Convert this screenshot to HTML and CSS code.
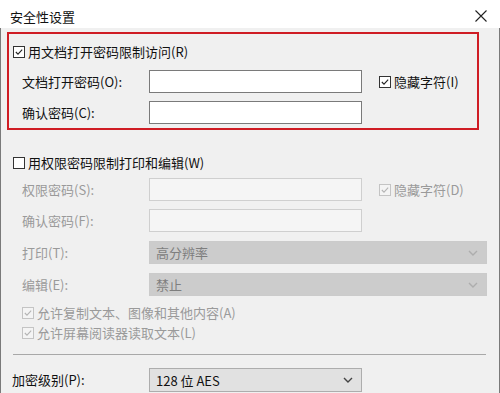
FILE: index.html
```html
<!DOCTYPE html>
<html lang="zh-CN">
<head>
    <meta charset="UTF-8">
    <meta name="viewport" content="width=device-width, initial-scale=1.0">
    <title>安全性设置</title>
    <link rel="stylesheet" href="styles.css">
</head>
<body>
    <div class="dialog">
        <div class="titlebar">
            <span class="title">安全性设置</span>
            <svg class="close" viewBox="0 0 14 14" xmlns="http://www.w3.org/2000/svg">
                <path d="M1.5 1.5L12.5 12.5M12.5 1.5L1.5 12.5"/>
            </svg>
        </div>

        <div class="content">
            <!-- open password -->
            <div class="group highlight">
                <div class="check-row head">
                    <span class="box"><svg viewBox="0 0 12 12"><path d="M2.2 6L4.8 8.6L9.8 3.2"/></svg></span>
                    <span>用文档打开密码限制访问(R)</span>
                </div>
                <div class="field-row">
                    <label>文档打开密码(O):</label>
                    <input class="textbox" type="password">
                    <div class="check-row side">
                        <span class="box"><svg viewBox="0 0 12 12"><path d="M2.2 6L4.8 8.6L9.8 3.2"/></svg></span>
                        <span>隐藏字符(I)</span>
                    </div>
                </div>
                <div class="field-row">
                    <label>确认密码(C):</label>
                    <input class="textbox" type="password">
                </div>
            </div>

            <!-- permissions password -->
            <div class="group perm">
                <div class="check-row head">
                    <span class="box"></span>
                    <span>用权限密码限制打印和编辑(W)</span>
                </div>
                <div class="field-row disabled">
                    <label>权限密码(S):</label>
                    <input class="textbox" type="password" disabled>
                    <div class="check-row side">
                        <span class="box"><svg viewBox="0 0 12 12"><path d="M2.2 6L4.8 8.6L9.8 3.2"/></svg></span>
                        <span>隐藏字符(D)</span>
                    </div>
                </div>
                <div class="field-row disabled">
                    <label>确认密码(F):</label>
                    <input class="textbox" type="password" disabled>
                </div>
                <div class="field-row select-row disabled">
                    <label>打印(T):</label>
                    <div class="dropdown">
                        <span>高分辨率</span>
                        <svg class="chevron" viewBox="0 0 10 6"><path d="M1 1L5 5L9 1"/></svg>
                    </div>
                </div>
                <div class="field-row select-row disabled">
                    <label>编辑(E):</label>
                    <div class="dropdown">
                        <span>禁止</span>
                        <svg class="chevron" viewBox="0 0 10 6"><path d="M1 1L5 5L9 1"/></svg>
                    </div>
                </div>
                <div class="check-row option first disabled">
                    <span class="box"><svg viewBox="0 0 12 12"><path d="M2.2 6L4.8 8.6L9.8 3.2"/></svg></span>
                    <span>允许复制文本、图像和其他内容(A)</span>
                </div>
                <div class="check-row option disabled">
                    <span class="box"><svg viewBox="0 0 12 12"><path d="M2.2 6L4.8 8.6L9.8 3.2"/></svg></span>
                    <span>允许屏幕阅读器读取文本(L)</span>
                </div>
            </div>

            <div class="separator"></div>

            <div class="level-row">
                <label>加密级别(P):</label>
                <div class="dropdown">
                    <span>128 位 AES</span>
                    <svg class="chevron" viewBox="0 0 10 6"><path d="M1 1L5 5L9 1"/></svg>
                </div>
            </div>
        </div>
    </div>
</body>
</html>
```

FILE: styles.css
```css
body {
    margin: 0;
    font-family: "Noto Sans CJK SC", "Microsoft YaHei", sans-serif;
    font-size: 13px;
    color: #111;
    background-color: #f0f0f0;
    overflow: hidden;
}
.dialog {
    width: 500px;
    height: 393px;
    overflow: hidden;
}
.titlebar {
    height: 28px;
    box-sizing: border-box;
    padding: 4px 12px 0 10px;
    background-color: #fff;
    display: flex;
    align-items: center;
    justify-content: space-between;
}
.close {
    width: 14px;
    height: 14px;
    stroke: #222;
    stroke-width: 1.1;
    fill: none;
}
.content {
    height: 365px;
    box-sizing: border-box;
    padding: 4px 12px 0 6px;
    border-left: 1px solid #7a7a7a;
    border-right: 1px solid #7a7a7a;
    background-color: #f0f0f0;
}
.highlight {
    border: 2px solid #cf1c24;
    margin-right: 8px;
    padding: 8px 0 4px 0;
}
.perm {
    padding-top: 23px;
}
label {
    line-height: 20px;
    white-space: nowrap;
}
.check-row {
    display: flex;
    align-items: center;
    gap: 3px;
    height: 20px;
    line-height: 20px;
    white-space: nowrap;
}
.check-row.head {
    padding-left: 4px;
}
.check-row.side {
    margin-left: 17px;
}
.perm .check-row.head {
    padding-left: 6px;
    margin-bottom: -3px;
}
.check-row.option {
    padding-left: 15px;
}
.check-row.option.first {
    margin-top: 7px;
}
.box {
    width: 12px;
    height: 12px;
    box-sizing: border-box;
    border: 1px solid #333;
    background-color: #fff;
    display: flex;
}
.box svg {
    width: 10px;
    height: 10px;
    fill: none;
    stroke: #222;
    stroke-width: 1.3;
}
.field-row {
    display: grid;
    grid-template-columns: 127px 213px auto;
    align-items: center;
    margin-top: 8px;
    padding-left: 13px;
}
.perm .field-row {
    padding-left: 15px;
}
.field-row.select-row {
    grid-template-columns: 127px 1fr;
    margin-top: 9px;
}
.textbox {
    width: 213px;
    height: 23px;
    box-sizing: border-box;
    margin: 0;
    padding: 0 4px;
    border: 1px solid #7a7a7a;
    background-color: #fff;
    font: inherit;
}
.textbox:disabled {
    border-color: #cfcfcf;
    background-color: #f5f5f5;
}
.dropdown {
    height: 23px;
    box-sizing: border-box;
    padding: 0 8px 0 6px;
    border: 1px solid #adadad;
    background-color: #e1e1e1;
    display: flex;
    align-items: center;
    justify-content: space-between;
}
.chevron {
    width: 10px;
    height: 6px;
    fill: none;
    stroke: #444;
    stroke-width: 1.4;
}
.disabled {
    color: #9a9a9a;
}
.disabled .box {
    border-color: #c4c4c4;
    background-color: #f4f4f4;
}
.disabled .box svg {
    stroke: #b4b4b4;
}
.disabled .dropdown {
    border-color: #cbcbcb;
    background-color: #cccccc;
    color: #7e7e7e;
}
.disabled .chevron {
    stroke: #adadad;
}
.separator {
    margin: 11px 1px 0 6px;
    border-top: 1px solid #a8a8a8;
}
.level-row {
    display: grid;
    grid-template-columns: 137px 213px;
    align-items: center;
    margin-top: 13px;
    padding-left: 5px;
}
.level-row .dropdown {
    height: 24px;
}
```
